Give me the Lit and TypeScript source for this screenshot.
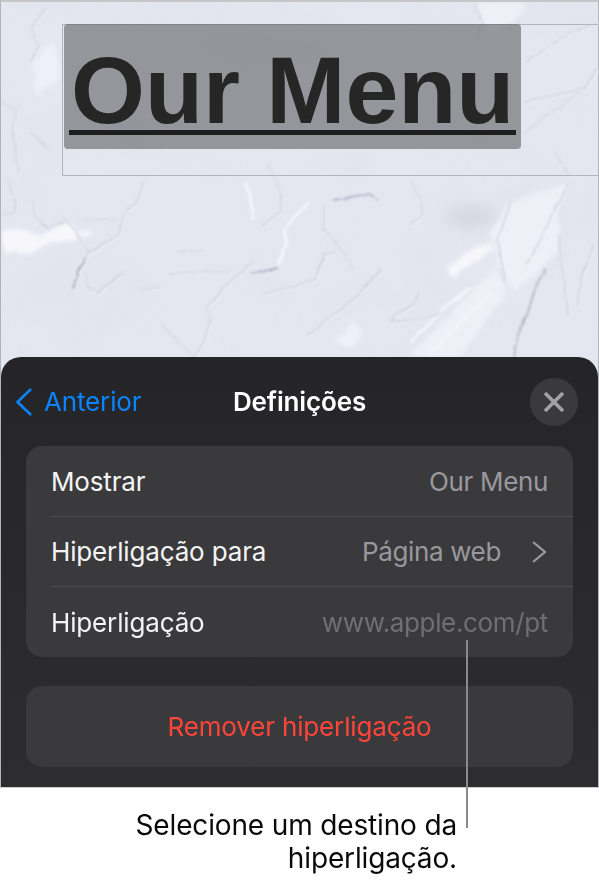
import { LitElement, html, css, svg } from "lit";
import { customElement } from "lit/decorators.js";

const bands = [
  "M408 355 L440 320 L493 267 L505 283 L503 297 L480 327 L457 355 Z",
  "M487 233 L510 200 L567 180 L557 207 L557 250 L537 270 L513 290 L497 263 L493 243 Z",
  "M333 337 L353 320 L363 333 L347 347 Z",
  "M30 60 L55 40 L60 75 L35 95 Z",
  "M474 0 L525 0 L512 22 L484 26 Z",
];
const brights = [
  "M447 270 L463 250 L490 242 L493 250 L467 265 L452 275 Z",
  "M2 230 L23 228 L43 233 L67 220 L75 232 L93 230 L90 237 L77 235 L50 242 L33 252 L2 248 Z",
];
const ridges = [
  "M245 180 L250 200 L252 218",
  "M308 200 L283 227 L285 243 L277 263",
  "M409 340 L445 305 L470 285",
  "M430 350 L470 310 L490 290",
];
const cracks = [
  "M72 287 L78 267 L88 250 L80 238 L65 218 L47 227 L33 212 L32 198",
  "M7 177 L15 203 L13 212 L2 213",
  "M143 180 L133 203 L123 213 L117 233 L88 250",
  "M85 270 L88 287 L98 290 L123 270",
  "M273 173 L280 190 L280 210 L262 223",
  "M323 203 L323 227 L340 247 L353 267",
  "M337 248 L323 253 L315 277 L297 283",
  "M252 260 L223 285 L205 307 L210 317 L203 340 L193 355",
  "M262 292 L300 283",
  "M380 267 L353 297 L307 333",
  "M417 290 L413 303 L395 313 L390 320 L423 317 L442 310",
  "M410 180 L420 197 L422 213 L408 223",
  "M558 233 L562 270 L567 313",
  "M593 243 L580 277 L577 303",
  "M510 200 L497 235 L503 280",
  "M567 182 L550 215 L533 250 L525 262",
  "M0 100 L17 110 L11 127 L18 170",
  "M45 7 L30 27 L38 43 L30 60",
  "M474 3 L481 20 L476 40",
  "M596 67 L584 87 L523 100",
  "M554 150 L569 173",
  "M267 163 L273 173",
  "M525 60 L570 30 L599 20",
];
const faint = [
  "M160 323 L193 355",
  "M177 250 L203 248",
  "M167 272 L230 268",
  "M83 218 L117 218",
  "M140 287 L160 283",
  "M525 130 L550 110 L580 90",
  "M30 130 L50 150",
];
const darks = [
  "M277 266 L250 272",
  "M333 198 L360 193 L367 193 L377 198",
  "M545 267 L533 290 L527 310 L517 333 L513 355",
  "M72 287 L78 267 L84 256",
];

@customElement("app-root")
export class AppRoot extends LitElement {
  static styles = css`
    :host {
      display: block;
      width: 599px;
      height: 880px;
      background: #fff;
      font-family: Inter, "Noto Sans", sans-serif;
      position: relative;
      overflow: hidden;
    }
    .stage {
      position: relative;
      height: 788px;
      box-sizing: border-box;
      background: #e4e6f0;
      border-left: 1px solid #b2b3b8;
      border-right: 1px solid #b2b3b8;
      border-top: 2px solid #c6c6c8;
      border-bottom: 1px solid #cfcfd1;
      display: flex;
      flex-direction: column;
    }
    .tex {
      position: absolute;
      left: 0;
      top: 0;
      width: 599px;
      height: 400px;
    }
    .canvas {
      position: relative;
      height: 355px;
      flex: none;
      padding: 22px 0 0 61px;
      box-sizing: border-box;
    }
    .box {
      height: 152px;
      box-sizing: border-box;
      border: 1px solid #b4b5bc;
      border-right: none;
    }
    .sel {
      width: 457px;
      height: 125px;
      margin: -1px 0 0 1px;
      background: rgba(96, 96, 100, 0.6);
      border-radius: 4px;
      box-sizing: border-box;
      padding: 19px 0 0 5px;
    }
    .title {
      display: inline-block;
      font: 700 95px/1 "Liberation Sans", Arial, sans-serif;
      color: #262626;
      white-space: nowrap;
      height: 92px;
      width: 447px;
      box-sizing: border-box;
      padding-left: 2px;
      border-bottom: 5px solid #1e1e1e;
    }
    .sheet {
      position: relative;
      flex: 1;
      border-radius: 20px 20px 0 0;
      background: linear-gradient(#252527, #2d2d2f);
      padding: 0 25px;
      display: flex;
      flex-direction: column;
    }
    .nav {
      height: 89px;
      display: grid;
      grid-template-columns: 1fr auto 1fr;
      align-items: center;
    }
    .back {
      display: flex;
      align-items: center;
      gap: 11px;
      margin-left: -11px;
      color: #0a84ff;
      font-size: 26px;
      letter-spacing: -0.15px;
    }
    .back svg { display: block; }
    .head {
      color: #fff;
      font-size: 26px;
      font-weight: 600;
      letter-spacing: -0.15px;
    }
    .close {
      justify-self: end;
      width: 48px;
      height: 48px;
      margin-right: -5px;
      border-radius: 50%;
      background: #3a3a3c;
      display: flex;
      align-items: center;
      justify-content: center;
    }
    .card {
      background: #3a3a3c;
      border-radius: 16px;
    }
    .row {
      height: 70px;
      box-sizing: border-box;
      margin-left: 25px;
      padding-right: 25px;
      display: flex;
      align-items: center;
      justify-content: space-between;
      border-bottom: 1px solid #4d4d4f;
      font-size: 26px;
      letter-spacing: -0.15px;
      color: #f4f4f5;
    }
    .row:first-child { height: 71px; }
    .row:last-child { border-bottom: none; }
    .val {
      color: #98989e;
      display: flex;
      align-items: center;
      gap: 30px;
      letter-spacing: -0.35px;
    }
    .dim { color: #6f6f74; }
    .val svg { display: block; margin-right: 1px; }
    .remove {
      margin-top: 29px;
      height: 81px;
      display: flex;
      align-items: center;
      justify-content: center;
      color: #ff453a;
      font-size: 26px;
      letter-spacing: -0.15px;
    }
    .leader {
      position: absolute;
      left: 466px;
      top: 640px;
      width: 2px;
      height: 188px;
      background: #8a8a8c;
    }
    .note {
      width: 457px;
      margin-top: 21px;
      text-align: right;
      font-size: 28px;
      line-height: 33px;
      color: #0a0a0a;
      letter-spacing: -0.15px;
    }
  `;

  private texture() {
    const paths = (list: string[]) => list.map((d) => svg`<path d=${d}></path>`);
    return html`<svg class="tex" viewBox="0 0 599 400" aria-hidden="true">
      <defs>
        <filter id="mottle" x="0" y="0" width="100%" height="100%">
          <feTurbulence type="fractalNoise" baseFrequency="0.008 0.012" numOctaves="3" seed="7"></feTurbulence>
          <feColorMatrix type="matrix" values="0 0 0 0 0.66  0 0 0 0 0.68  0 0 0 0 0.76  0.7 0.7 0 0 -0.62"></feColorMatrix>
        </filter>
        <filter id="plaster" x="0" y="0" width="100%" height="100%">
          <feTurbulence type="fractalNoise" baseFrequency="0.3" numOctaves="3" seed="3" result="n"></feTurbulence>
          <feDiffuseLighting in="n" surfaceScale="0.5" lighting-color="#ffffff">
            <feDistantLight azimuth="225" elevation="75"></feDistantLight>
          </feDiffuseLighting>
        </filter>
        <filter id="rough" filterUnits="userSpaceOnUse" x="0" y="0" width="599" height="400">
          <feTurbulence type="fractalNoise" baseFrequency="0.09" numOctaves="3" seed="11" result="n"></feTurbulence>
          <feDisplacementMap in="SourceGraphic" in2="n" scale="4" xChannelSelector="R" yChannelSelector="G"></feDisplacementMap>
          <feGaussianBlur stdDeviation="0.8"></feGaussianBlur>
        </filter>
        <filter id="roughsoft" filterUnits="userSpaceOnUse" x="0" y="0" width="599" height="400">
          <feTurbulence type="fractalNoise" baseFrequency="0.05" numOctaves="3" seed="5" result="n"></feTurbulence>
          <feDisplacementMap in="SourceGraphic" in2="n" scale="10" xChannelSelector="R" yChannelSelector="G"></feDisplacementMap>
          <feGaussianBlur stdDeviation="2"></feGaussianBlur>
        </filter>
        <filter id="smudge" x="-80%" y="-80%" width="260%" height="260%"><feGaussianBlur stdDeviation="8"></feGaussianBlur></filter>
      </defs>
      <rect width="599" height="400" filter="url(#mottle)" opacity="0.35"></rect>
      <ellipse cx="470" cy="215" rx="26" ry="10" fill="#d3d5df" filter="url(#smudge)"></ellipse>
      <g fill="#eef0f7" filter="url(#roughsoft)">${paths(bands)}</g>
      <g fill="#f7f7fb" filter="url(#roughsoft)">${paths(brights)}</g>
      <g fill="none" stroke="#f4f5fa" stroke-width="3" filter="url(#rough)">${paths(ridges)}</g>
      <g transform="translate(1 1)" fill="none" stroke="#f1f2f8" stroke-width="1.6" filter="url(#rough)">${paths(cracks)}</g>
      <g fill="none" stroke="#c9ccd9" stroke-width="1.2" filter="url(#rough)">${paths(cracks)}</g>
      <g fill="none" stroke="#d2d5e0" stroke-width="1.2" filter="url(#rough)">${paths(faint)}</g>
      <g fill="none" stroke="#a4a8ba" stroke-width="1.3" filter="url(#rough)">${paths(darks)}</g>
      <rect width="599" height="400" filter="url(#plaster)" opacity="0.1" style="mix-blend-mode:multiply"></rect>
    </svg>`;
  }

  render() {
    return html`
      <div class="stage">
        ${this.texture()}
        <div class="canvas">
          <div class="box">
            <div class="sel"><span class="title">Our Menu</span></div>
          </div>
        </div>
        <div class="sheet">
          <div class="nav">
            <div class="back">
              <svg width="18" height="30" viewBox="0 0 18 30"><path d="M16 2 L2.5 15 L16 28" fill="none" stroke="#0a84ff" stroke-width="2.6"></path></svg>
              <span>Anterior</span>
            </div>
            <div class="head">Definições</div>
            <div class="close">
              <svg width="22" height="22" viewBox="0 0 22 22"><path d="M2 2 L20 20 M20 2 L2 20" fill="none" stroke="#a1a1a8" stroke-width="3.6"></path></svg>
            </div>
          </div>
          <div class="card">
            <div class="row"><span>Mostrar</span><span class="val">Our Menu</span></div>
            <div class="row"><span>Hiperligação para</span><span class="val">Página web
              <svg width="16" height="24" viewBox="0 0 16 24"><path d="M2 2 L14 12 L2 22" fill="none" stroke="#98989e" stroke-width="2.2"></path></svg></span></div>
            <div class="row"><span>Hiperligação</span><span class="val dim">www.apple.com/pt</span></div>
          </div>
          <div class="card remove">Remover hiperligação</div>
        </div>
      </div>
      <div class="leader"></div>
      <div class="note">Selecione um destino da<br />hiperligação.</div>
    `;
  }
}
